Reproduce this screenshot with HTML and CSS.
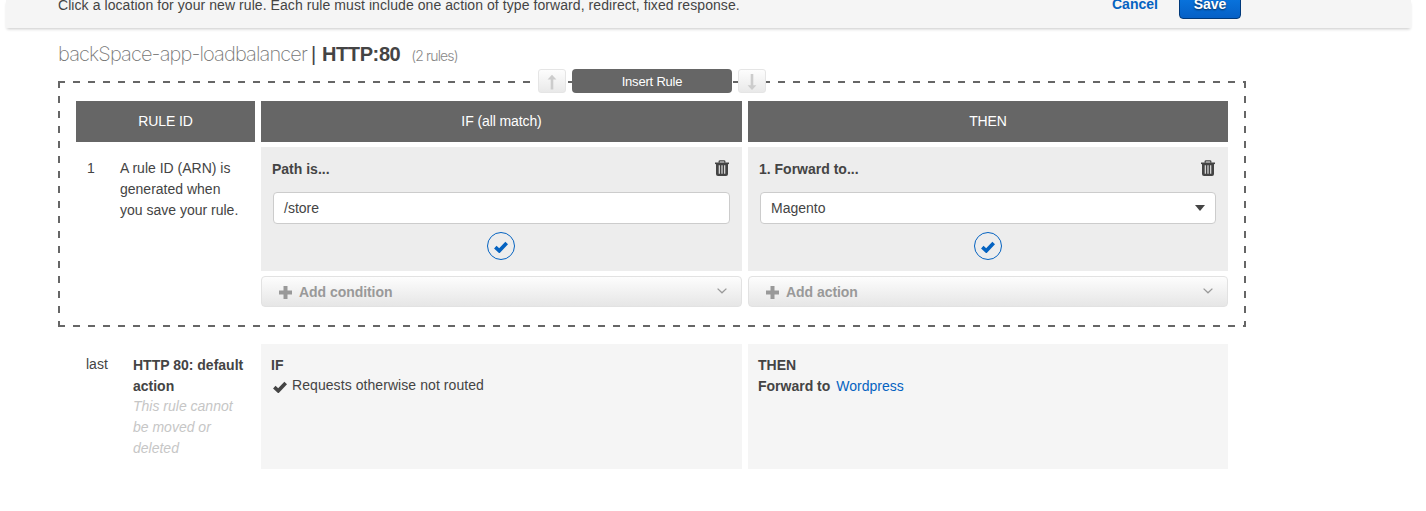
FILE: index.html
```html
<!DOCTYPE html>
<html lang="en">
<head>
<meta charset="utf-8">
<title>Insert rule</title>
<link rel="stylesheet" href="styles.css">
</head>
<body>
<svg width="0" height="0" class="defs">
  <symbol id="trash" viewBox="0 0 14 16"><path d="M4.2 2.8V1.6Q4.2.8 5 .8h4q.8 0 .8.8v1.2" fill="none" stroke="currentColor" stroke-width="1.3"/><path d="M0 2.5h14v1.6H0z" fill="currentColor"/><path d="M1 4h12v10q0 2-2 2H3q-2 0-2-2z" fill="currentColor"/><path d="M4.3 5.2v8.6M7 5.2v8.6M9.7 5.2v8.6" stroke="#ededed" stroke-width="1.1"/></symbol>
  <symbol id="check" viewBox="0 0 14 12"><path d="M1.3 6.2 5.3 9.8 12.7 2" fill="none" stroke="currentColor" stroke-width="3.7"/></symbol>
  <symbol id="plus" viewBox="0 0 13 13"><path d="M6.5 0v13M0 6.5h13" fill="none" stroke="currentColor" stroke-width="4"/></symbol>
  <symbol id="chevron" viewBox="0 0 10 6"><path d="M.6.6 5 4.8 9.4.6" fill="none" stroke="currentColor" stroke-width="1.3"/></symbol>
</svg>
<header class="bar">
  <p class="hint">Click a location for your new rule. Each rule must include one action of type forward, redirect, fixed response.</p>
  <a class="cancel">Cancel</a>
  <button class="save">Save</button>
</header>
<main>
  <h1 class="title"><span class="name">backSpace-app-loadbalancer</span><span class="sep">|</span><b>HTTP:80</b><small>(2 rules)</small></h1>
  <section class="editor">
    <div class="insert">
      <span class="arrow"><svg width="10" height="16" viewBox="0 0 10 16"><path d="M5 15.5V3" stroke="#ccc" stroke-width="2.6"/><path d="M.6 5.5 5 .8l4.4 4.7z" fill="#ccc"/></svg></span>
      <span class="insert-label">Insert Rule</span>
      <span class="arrow"><svg width="10" height="16" viewBox="0 0 10 16"><path d="M5 0v13" stroke="#ccc" stroke-width="2.6"/><path d="M.6 11.2 5 16l4.4-4.8z" fill="#ccc"/></svg></span>
    </div>
    <div class="row heads"><div>RULE ID</div><div>IF (all match)</div><div>THEN</div></div>
    <div class="row">
      <div class="rule-id"><span class="num">1</span><p class="arn">A rule ID (ARN) is<br>generated when<br>you save your rule.</p></div>
      <div class="col">
        <div class="panel">
          <div class="panel-head"><b>Path is...</b><svg class="trash"><use href="#trash"/></svg></div>
          <div class="field"><span>/store</span></div>
          <div class="ok"><svg width="14" height="12"><use href="#check"/></svg></div>
        </div>
        <div class="add"><svg width="13" height="13"><use href="#plus"/></svg><span>Add condition</span><svg class="chev" width="10" height="6"><use href="#chevron"/></svg></div>
      </div>
      <div class="col">
        <div class="panel">
          <div class="panel-head"><b>1. Forward to...</b><svg class="trash"><use href="#trash"/></svg></div>
          <div class="field"><span>Magento</span><i class="caret"></i></div>
          <div class="ok"><svg width="14" height="12"><use href="#check"/></svg></div>
        </div>
        <div class="add"><svg width="13" height="13"><use href="#plus"/></svg><span>Add action</span><svg class="chev" width="10" height="6"><use href="#chevron"/></svg></div>
      </div>
    </div>
  </section>
  <section class="row last">
    <div class="rule-id"><span class="num">last</span><div class="default"><b>HTTP 80: default<br>action</b><em>This rule cannot<br>be moved or<br>deleted</em></div></div>
    <div class="box"><b>IF</b><p class="req"><svg width="14" height="12"><use href="#check"/></svg><span>Requests otherwise not routed</span></p></div>
    <div class="box"><b>THEN</b><p class="to"><b>Forward to</b><a>Wordpress</a></p></div>
  </section>
</main>
</body>
</html>
```
FILE: styles.css
```css
* { box-sizing: border-box; }
body { margin: 0; background: #fff; color: #444; font: 14px/21px "Liberation Sans", Arial, sans-serif; overflow: hidden; }
p, h1 { margin: 0; }
b { font-weight: 700; }
a { color: #0563c1; }
.defs { display: block; position: absolute; }

.bar { display: flex; align-items: flex-start; height: 28px; margin: 0 15px 0 6px; padding-left: 52px; background: #f5f5f5; box-shadow: 0 2px 3px -1px rgba(0,0,0,.22); }
.hint { width: 1054px; margin-top: -5px; letter-spacing: .07px; white-space: nowrap; }
.cancel { width: 67px; margin-top: -6px; font-weight: 700; }
.save { width: 62px; height: 29px; margin-top: -10px; padding: 0; border: 1px solid #00397a; border-radius: 4px; background: linear-gradient(#0a7be6, #0560c6); color: #fff; font: 700 14px/27px "Liberation Sans", Arial, sans-serif; text-shadow: 0 1px 2px rgba(0,0,0,.6); }

main { padding-left: 58px; }
.title { display: flex; align-items: baseline; height: 53px; padding-top: 14px; font-size: 20px; line-height: 25px; font-weight: 400; }
.name { width: 253px; color: #777; font-family: Inter, sans-serif; font-weight: 200; letter-spacing: -.88px; white-space: nowrap; }
.sep { width: 11px; }
.title b { letter-spacing: -.4px; }
.title small { margin-left: 11px; color: #888; font: 300 14px Inter, sans-serif; letter-spacing: -.87px; }

.editor { position: relative; width: 1188px; height: 246px; padding: 20px 18px;
  --h: repeating-linear-gradient(90deg, #666 0 7px, transparent 7px 15px);
  --v: repeating-linear-gradient(180deg, #666 0 7px, transparent 7px 15px);
  background: var(--h) 0 0 / 100% 2px no-repeat, var(--h) 0 100% / 100% 2px no-repeat, var(--v) 0 0 / 2px 100% no-repeat, var(--v) 100% 0 / 2px 100% no-repeat; }
.insert { position: absolute; left: 480px; top: -12px; display: flex; gap: 6px; }
.arrow { display: flex; align-items: center; justify-content: center; width: 28px; height: 24px; padding-top: 2px; border: 1px solid #e5e5e5; border-radius: 3px; background: linear-gradient(#fdfdfd, #e9e9e9); }
.insert-label { width: 160px; height: 24px; border-radius: 4px; background: #666; color: #fff; font-size: 13px; line-height: 25px; letter-spacing: -.2px; text-align: center; }

.row { display: grid; grid-template-columns: 179px 481px 480px; gap: 6px; }
.heads { margin-bottom: 5px; }
.heads div { height: 41px; background: #666; color: #fff; line-height: 40px; letter-spacing: -.1px; text-align: center; }
.rule-id { display: flex; padding: 11px 0 0 11px; }
.num { width: 33px; }
.arn { white-space: nowrap; }
.panel { height: 124px; padding: 11px 12px 0; background: #ededed; }
.panel-head { display: flex; justify-content: space-between; height: 34px; margin-left: -1px; line-height: 22px; }
.trash { width: 14px; height: 16px; margin: 2px 1px 0 0; }
.field { display: flex; align-items: center; justify-content: space-between; height: 32px; padding: 0 10px; border: 1px solid #ccc; border-radius: 4px; background: #fff; }
.caret { border: 5px solid transparent; border-top: 6px solid #444; border-bottom: 0; }
.ok { display: flex; align-items: center; justify-content: center; width: 28px; height: 28px; margin: 8px 0 0 214px; padding-top: 2px; border: 1px solid #0563c1; border-radius: 50%; color: #0563c1; }
.add { display: flex; align-items: center; height: 31px; margin-top: 5px; padding: 1px 14px 0 17px; border: 1px solid #e2e2e2; border-radius: 4px; background: linear-gradient(#fdfdfd, #e6e6e6); color: #999; font-weight: 700; }
.add span { margin-left: 7px; letter-spacing: -.05px; }
.chev { margin: -2px 0 0 auto; }

.last { height: 125px; margin: 17px 0 0 18px; }
.last .rule-id { padding: 10px 0 0 10px; }
.last .num { width: 47px; }
.default { padding-top: 1px; white-space: nowrap; }
.default b, .default em { display: block; }
.default em { margin-top: -1px; color: #c6c6c6; }
.box { height: 125px; padding: 11px 10px; background: #f5f5f5; }
.box > b { display: block; }
.req { display: flex; align-items: center; margin-top: -1px; letter-spacing: .07px; }
.req svg { margin: 3px 5px 0 2px; }
.to { display: flex; gap: 6px; }
```
